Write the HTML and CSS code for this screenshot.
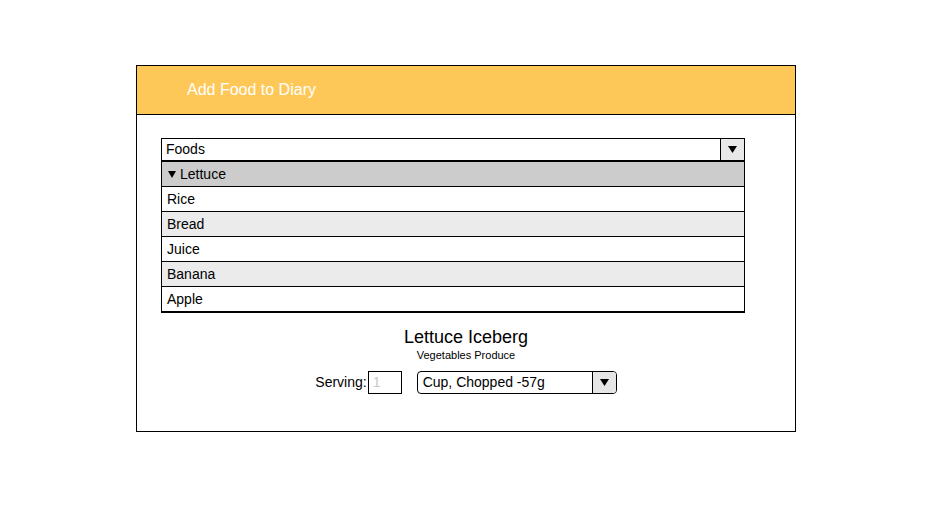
FILE: index.html
```html
<!DOCTYPE html>
<html>
<head>
<meta charset="utf-8">
<link rel="stylesheet" href="styles.css">
</head>
<body>
<div class="panel">
  <div class="header">Add Food to Diary</div>
  <div class="content">
    <div class="picker">
      <div class="combo">
        <div class="combo-text">Foods</div>
        <div class="combo-btn"><svg width="9" height="7" viewBox="0 0 9 7"><polygon points="0,0 9,0 4.5,7" fill="#000"/></svg></div>
      </div>
      <div class="list">
        <div class="row row-selected"><svg class="tri" width="8" height="7" viewBox="0 0 8 7"><polygon points="0,0 8,0 4,7" fill="#000"/></svg>Lettuce</div>
        <div class="row">Rice</div>
        <div class="row row-alt">Bread</div>
        <div class="row">Juice</div>
        <div class="row row-alt">Banana</div>
        <div class="row">Apple</div>
      </div>
    </div>
    <div class="detail">
      <div class="title">Lettuce Iceberg</div>
      <div class="subtitle">Vegetables Produce</div>
      <div class="serving">
        <span class="serving-label">Serving:</span>
        <div class="serving-input">1</div>
        <div class="select">
          <div class="select-text">Cup, Chopped -57g</div>
          <div class="select-btn"><svg width="9" height="7" viewBox="0 0 9 7"><polygon points="0,0 9,0 4.5,7" fill="#000"/></svg></div>
        </div>
      </div>
    </div>
  </div>
</div>
</body>
</html>
```

FILE: styles.css
```css
html, body {
  margin: 0;
  padding: 0;
  background: #fff;
}
body {
  font-family: "Liberation Sans", Arial, sans-serif;
  color: #000;
}
.panel {
  box-sizing: border-box;
  width: 660px;
  height: 367px;
  margin: 65px 0 0 136px;
  border: 1px solid #000;
}
.header {
  box-sizing: border-box;
  height: 49px;
  background: #fec858;
  border-bottom: 1px solid #000;
  display: flex;
  align-items: center;
  padding-left: 50px;
  color: #fff;
  font-size: 16px;
}
.content {
  padding: 23px 0 0 24px;
}
.picker {
  width: 584px;
}
.combo {
  box-sizing: border-box;
  height: 24px;
  border: 1px solid #000;
  border-bottom-width: 2px;
  display: flex;
}
.combo-text {
  flex: 1;
  padding-left: 4px;
  font-size: 14px;
  line-height: 21px;
}
.combo-btn {
  width: 23px;
  border-left: 1px solid #000;
  background: #e8e8e8;
  display: flex;
  align-items: center;
  justify-content: center;
}
.list {
  border: 1px solid #000;
  border-top: 0;
  border-bottom-width: 2px;
}
.row {
  height: 24px;
  line-height: 24px;
  padding-left: 5px;
  font-size: 14px;
  border-top: 1px solid #000;
  display: flex;
  align-items: center;
}
.row:first-child {
  border-top: 0;
}
.row-selected {
  background: #cccccc;
}
.row-alt {
  background: #ebebeb;
}
.tri {
  margin-right: 4px;
  margin-left: 1px;
}
.detail {
  margin-left: -24px;
  display: flex;
  flex-direction: column;
  align-items: center;
}
.title {
  margin-top: 14px;
  font-size: 18px;
  line-height: 21px;
}
.subtitle {
  margin-top: 1px;
  font-size: 11px;
  line-height: 13px;
}
.serving {
  margin-top: 9px;
  display: flex;
  align-items: center;
  font-size: 14px;
}
.serving-label {
  line-height: 23px;
}
.serving-input {
  box-sizing: border-box;
  width: 34px;
  height: 23px;
  margin-left: 1px;
  border: 1px solid #000;
  color: #c8c8c8;
  padding-left: 4px;
  line-height: 21px;
}
.select {
  box-sizing: border-box;
  width: 200px;
  height: 23px;
  margin-left: 15px;
  border: 1px solid #000;
  border-radius: 4px;
  display: flex;
  overflow: hidden;
}
.select-text {
  flex: 1;
  padding-left: 5px;
  line-height: 21px;
}
.select-btn {
  width: 23px;
  border-left: 1px solid #000;
  background: #e6e6e6;
  display: flex;
  align-items: center;
  justify-content: center;
}
```
